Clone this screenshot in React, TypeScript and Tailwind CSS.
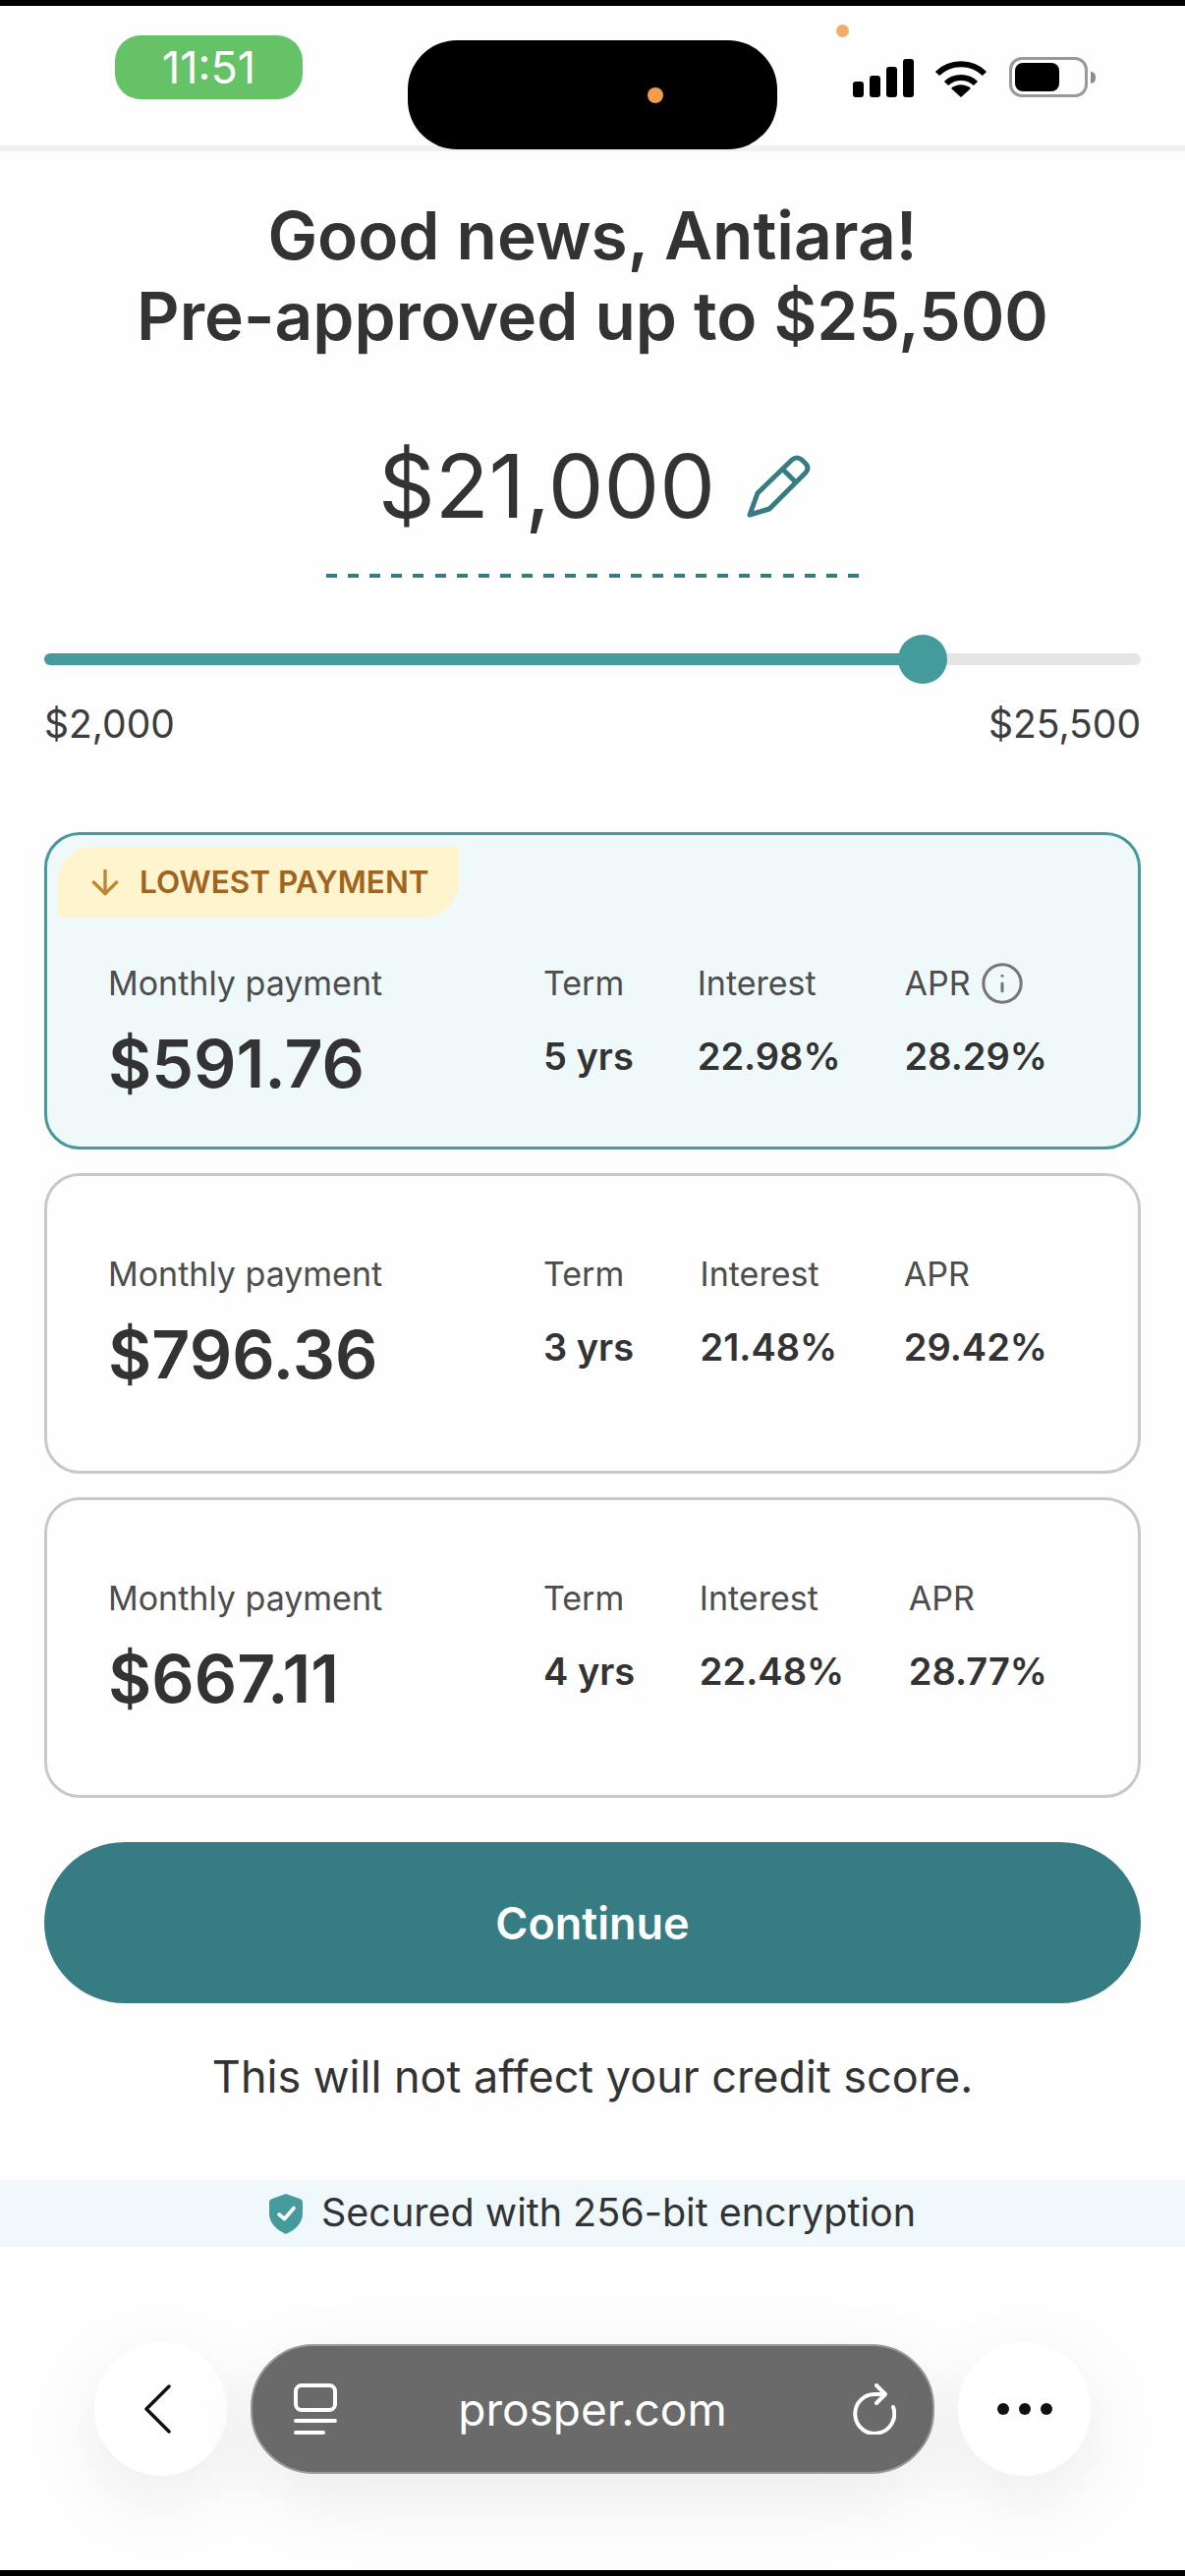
import { ArrowDown, Info } from 'lucide-react'

const offers = [
  { payment: '$796.36', term: '3 yrs', interest: '21.48%', apr: '29.42%' },
  { payment: '$667.11', term: '4 yrs', interest: '22.48%', apr: '28.77%' },
]

const OfferRow = ({ payment, term, interest, apr, showInfo = false }) => {
  return (
    <div className="flex items-start">
      <div className="w-[443px] shrink-0">
        <p className="text-[34px] leading-[44px] text-[#4d4d4d]">Monthly payment</p>
        <p className="mt-[19px] text-[68px] leading-[80px] font-semibold text-[#333333]">{payment}</p>
      </div>
      <div className="flex flex-1 justify-between">
        <div>
          <p className="text-[34px] leading-[44px] text-[#4d4d4d]">Term</p>
          <p className="mt-[27px] text-[38px] leading-[50px] font-semibold text-[#333333]">{term}</p>
        </div>
        <div>
          <p className="text-[34px] leading-[44px] text-[#4d4d4d]">Interest</p>
          <p className="mt-[27px] text-[38px] leading-[50px] font-semibold text-[#333333]">{interest}</p>
        </div>
        <div>
          <div className="flex h-[44px] items-center gap-[9px]">
            <p className="text-[34px] leading-[44px] text-[#4d4d4d]">APR</p>
            {showInfo && <Info size={46} strokeWidth={1.6} className="text-[#777777]" />}
          </div>
          <p className="mt-[27px] text-[38px] leading-[50px] font-semibold text-[#333333]">{apr}</p>
        </div>
      </div>
    </div>
  )
}

const StatusIcons = () => {
  return (
    <div className="flex items-end">
      <div className="flex items-end gap-[6px]">
        <span className="h-[16px] w-[11px] rounded-[3px] bg-black"></span>
        <span className="h-[22px] w-[11px] rounded-[3px] bg-black"></span>
        <span className="h-[31px] w-[11px] rounded-[3px] bg-black"></span>
        <span className="h-[39px] w-[11px] rounded-[3px] bg-black"></span>
      </div>
      <svg width="54" height="39" viewBox="0 0 54 39" className="ml-[21px]">
        <path d="M3 15 C16 2 38 2 51 15" fill="none" stroke="#000" strokeWidth="6" strokeLinecap="butt" />
        <path d="M12 25 C20 17 34 17 42 25" fill="none" stroke="#000" strokeWidth="6" strokeLinecap="butt" />
        <path d="M17 30 C23 25 31 25 37 30 L27 39 Z" fill="#000" />
      </svg>
      <div className="ml-[22px] flex items-center">
        <div className="h-[41px] w-[80px] rounded-[13px] border-[3px] border-[#999999] p-[3px]">
          <div className="h-full w-[45px] rounded-[8px] bg-black"></div>
        </div>
        <span className="ml-[3px] h-[12px] w-[5px] rounded-r-full bg-[#8c8c8c]"></span>
      </div>
    </div>
  )
}

const App = () => {
  return (
    <div className="relative flex h-[2622px] w-[1206px] flex-col overflow-hidden bg-[#fefefe] font-['Inter',sans-serif]">
      <div className="h-[6px] bg-black"></div>

      <header className="flex h-[148px] border-b-[6px] border-[#f0f0f0] pl-[117px]">
        <div className="mt-[30px] flex h-[65px] w-[191px] items-center justify-center rounded-[26px] bg-[#66c266] text-[45px] text-white">
          11:51
        </div>
        <div className="mt-[35px] ml-[107px] flex h-[111px] w-[376px] items-center justify-end rounded-[50px] bg-black pr-[116px]">
          <span className="h-[16px] w-[16px] rounded-full bg-[#f19d4c]"></span>
        </div>
        <div className="mt-[52px] ml-[77px]">
          <StatusIcons />
        </div>
      </header>
      <span className="absolute top-[25px] left-[851px] h-[13px] w-[13px] rounded-full bg-[#f4ad68]"></span>

      <main className="px-[45px]">
        <h1 className="mt-[45px] text-center text-[67.6px] leading-[82px] font-semibold text-[#333333]">
          Good news, Antiara!
          <br />
          Pre-approved up to $25,500
        </h1>

        <div className="mt-[82px] flex items-center justify-center pl-[5px]">
          <span className="text-[90px] leading-[100px] text-[#333333]">$21,000</span>
          <svg width="67" height="64" viewBox="20 23 67 64" className="ml-[31px] overflow-visible">
            <path
              d="M24 84 L32 62 L67 28 Q72 24 77 28 L81 32 Q85 36 81 41 L44 78 Z M58 38 L72 52"
              fill="none"
              stroke="#377c83"
              strokeWidth="5"
              strokeLinejoin="round"
            />
          </svg>
        </div>
        <div className="mx-auto mt-[39px] h-[4px] w-[542px] bg-[repeating-linear-gradient(90deg,#377c83_0,#377c83_11px,transparent_11px,transparent_22.125px)]"></div>

        <div className="relative mt-[77px] h-[12px] rounded-full bg-[#e5e5e5]">
          <div className="h-full w-[894px] rounded-full bg-[#459a9b]"></div>
          <span className="absolute top-[-19px] left-[869px] h-[50px] w-[50px] rounded-full bg-[#459a9b]"></span>
        </div>
        <div className="mt-[35px] flex justify-between text-[39px] leading-[50px] text-[#3d3d3d]">
          <span>$2,000</span>
          <span>$25,500</span>
        </div>

        <div className="mt-[85px] flex flex-col gap-[24px]">
          <section className="h-[323px] rounded-[36px] border-[3px] border-[#459a9b] bg-[#f0f9fa]">
            <div className="mt-[11px] ml-[11px] flex h-[73px] w-[408px] items-center rounded-tl-[36px] rounded-br-[36px] bg-[#fef5cf] pl-[28px]">
              <ArrowDown size={40} strokeWidth={2} className="text-[#c2842f]" />
              <span className="ml-[15px] text-[31.5px] font-semibold text-[#a0641e]">LOWEST PAYMENT</span>
            </div>
            <div className="mt-[45px] pr-[92px] pl-[62px]">
              <OfferRow payment="$591.76" term="5 yrs" interest="22.98%" apr="28.29%" showInfo />
            </div>
          </section>

          {offers.map((offer) => (
            <section
              key={offer.term}
              className="h-[306px] rounded-[36px] border-[3px] border-[#c9c9c9] pt-[78px] pr-[92px] pl-[62px]">
              <OfferRow {...offer} />
            </section>
          ))}
        </div>

        <button className="mt-[45px] h-[164px] w-full rounded-full bg-[#377c83] pt-[2px] text-[45px] font-semibold text-white">
          Continue
        </button>
        <p className="mt-[48px] text-center text-[45px] leading-[54px] text-[#333333]">
          This will not affect your credit score.
        </p>
      </main>

      <div className="mt-[78px] flex h-[68px] items-center justify-center bg-[#eff8fa]">
        <svg width="34" height="41" viewBox="0 0 34 41">
          <path d="M17 0 L31 5 Q34 6 34 9 V20 C34 30 26 37 17 41 C8 37 0 30 0 20 V9 Q0 6 3 5 Z" fill="#459a9b" />
          <path d="M10 21 L15.5 25.5 L25 14.5" fill="none" stroke="#fff" strokeWidth="3.6" strokeLinecap="round" strokeLinejoin="round" />
        </svg>
        <span className="ml-[19px] text-[39.5px] text-[#333333]">Secured with 256-bit encryption</span>
      </div>

      <nav className="mx-[96px] mt-[97px] flex h-[136px] items-center gap-[24px]">
        <button className="flex h-[136px] w-[135px] shrink-0 items-center justify-center rounded-full bg-white pr-[8px] shadow-[0_24px_80px_rgba(0,0,0,0.08)]">
          <svg width="28" height="50" viewBox="0 0 28 50">
            <path d="M26 2 L3 25 L26 48" fill="none" stroke="#111" strokeWidth="3.5" strokeLinecap="round" strokeLinejoin="round" />
          </svg>
        </button>
        <div className="flex h-[132px] flex-1 items-center justify-between rounded-[64px] border-2 border-[#999999] bg-[#6a6a6a] pr-[37px] pl-[42px] text-white shadow-[0_24px_80px_rgba(0,0,0,0.08)]">
          <svg width="44" height="52" viewBox="0 0 44 52">
            <rect x="2" y="2" width="40" height="25" rx="6" fill="none" stroke="#fff" strokeWidth="4" />
            <path d="M2 38 H42 M2 50 H30" fill="none" stroke="#fff" strokeWidth="4" strokeLinecap="round" />
          </svg>
          <span className="mr-[5px] text-[46px]">prosper.com</span>
          <svg width="44" height="52" viewBox="0 0 44 52">
            <path d="M41 24 A20 20 0 1 1 24 11 H33 M24 2 L33 11 L24 20" fill="none" stroke="#fff" strokeWidth="4" strokeLinecap="round" strokeLinejoin="round" />
          </svg>
        </div>
        <button className="flex h-[136px] w-[135px] shrink-0 items-center justify-center gap-[10px] rounded-full bg-white shadow-[0_24px_80px_rgba(0,0,0,0.08)]">
          <span className="h-[12px] w-[12px] rounded-full bg-[#111111]"></span>
          <span className="h-[12px] w-[12px] rounded-full bg-[#111111]"></span>
          <span className="h-[12px] w-[12px] rounded-full bg-[#111111]"></span>
        </button>
      </nav>

      <div className="mt-auto h-[6px] bg-black"></div>
    </div>
  )
}

export default App
